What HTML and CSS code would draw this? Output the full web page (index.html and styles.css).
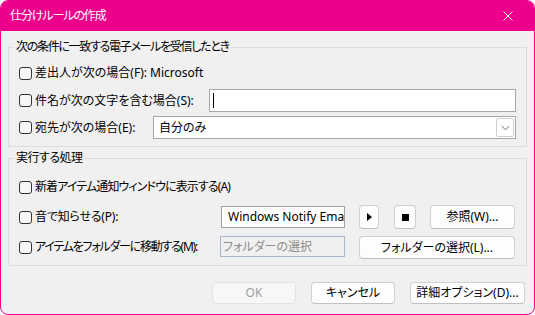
FILE: index.html
```html
<!DOCTYPE html>
<html lang="ja">
<head>
  <meta charset="UTF-8" />
  <title>仕分けルールの作成</title>
  <link rel="stylesheet" href="styles.css">
</head>
<body>
  <div class="dialog">
    <div class="titlebar">
      <span class="title">仕分けルールの作成</span>
      <svg class="close" viewBox="0 0 10 10"><path d="M0.5 0.5L9.5 9.5M9.5 0.5L0.5 9.5"/></svg>
    </div>

    <div class="content">
      <fieldset class="group group-cond">
        <legend>次の条件に一致する電子メールを受信したとき</legend>
        <div class="rows">
          <div class="row row-from">
            <span class="check"></span>
            <span>差出人が次の場合(F):&nbsp;Microsoft</span>
          </div>
          <div class="row row-subject">
            <span class="check"></span>
            <span>件名が次の文字を含む場合(S):</span>
            <div class="field field-subject"><span class="caret"></span></div>
          </div>
          <div class="row row-to">
            <span class="check"></span>
            <span>宛先が次の場合(E):</span>
            <div class="field select">
              <span>自分のみ</span>
              <span class="drop">
                <svg viewBox="0 0 10 6"><path d="M1 1L5 5L9 1"/></svg>
              </span>
            </div>
          </div>
        </div>
      </fieldset>

      <fieldset class="group group-action">
        <legend>実行する処理</legend>
        <div class="rows">
          <div class="row row-notify">
            <span class="check"></span>
            <span class="lbl-notify">新着アイテム通知ウィンドウに表示する(A)</span>
          </div>
          <div class="row row-sound">
            <span class="check"></span>
            <span class="lbl-sound">音で知らせる(P):</span>
            <div class="field field-sound">Windows Notify Ema</div>
            <button class="btn btn-icon btn-play"><span class="tri"></span></button>
            <button class="btn btn-icon btn-stop"><span class="sq"></span></button>
            <button class="btn btn-browse">参照(W)...</button>
          </div>
          <div class="row row-move">
            <span class="check"></span>
            <span class="lbl-move">アイテムをフォルダーに移動する(M):</span>
            <div class="field field-folder">フォルダーの選択</div>
            <button class="btn btn-folder">フォルダーの選択(L)...</button>
          </div>
        </div>
      </fieldset>

      <div class="footer">
        <button class="btn btn-foot btn-ok" disabled>OK</button>
        <button class="btn btn-foot">キャンセル</button>
        <button class="btn btn-foot btn-adv">詳細オプション(D)...</button>
      </div>
    </div>
  </div>
</body>
</html>
```

FILE: styles.css
```css
:root {
  --pink:    #ec008c;
  --face:    #f0f0f0;
  --frame:   #dcdcdc;
  --edit:    #a8a8a8;
  --btn-bd:  #d0d0d0;
  --text:    #000;
}
* { box-sizing: border-box; margin: 0; padding: 0; }
body {
  width: 535px;
  height: 315px;
  background: #fff;
  font-family: "Noto Sans", "Noto Sans CJK JP", sans-serif;
  font-size: 12px;
  line-height: 16px;
  font-feature-settings: "palt";
  color: var(--text);
}
.dialog {
  width: 535px;
  height: 315px;
  border: 1px solid var(--pink);
  border-radius: 8px;
  overflow: hidden;
  background: var(--face);
  display: flex;
  flex-direction: column;
}

/* title bar */
.titlebar {
  height: 30px;
  flex: none;
  background: var(--pink);
  display: flex;
  align-items: center;
  padding: 0 0 0 9px;
  color: #fff;
}
.title { flex: 1; letter-spacing: -1.1px; }
.close {
  width: 10px; height: 10px;
  margin-right: 21px;
  stroke: #fff;
  stroke-width: 1;
  fill: none;
}

.content {
  flex: 1;
  padding: 8px 7px 0;
}

/* group boxes */
.group {
  border: 1px solid var(--frame);
  min-inline-size: 0;
}
.group legend {
  margin-left: 5px;
  padding: 0 2px;
  line-height: 16px;
}
.group-cond legend { letter-spacing: -1.3px; }
.group-action legend { letter-spacing: -0.5px; }
.group-action { margin-top: 3px; }
.rows {
  display: flex;
  flex-direction: column;
  padding: 0 10px;
}
.group-cond .rows { padding-top: 8px; padding-bottom: 7px; }
.group-action .rows { padding-top: 11px; padding-bottom: 6px; padding-right: 11px; }

.row {
  display: flex;
  align-items: center;
  white-space: nowrap;
}
.row-from, .row-notify { height: 20px; }
.row-subject { height: 23px; margin-top: 6px; }
.row-to      { height: 23px; margin-top: 4px; }
.row-sound   { height: 24px; margin-top: 8px; }
.row-move    { height: 24px; margin-top: 6px; }

.lbl-notify { letter-spacing: -0.9px; }
.lbl-sound  { letter-spacing: -0.2px; }
.lbl-move   { letter-spacing: -1.25px; }

.check {
  width: 13px; height: 13px;
  flex: none;
  margin-right: 3px;
  border: 1px solid #333;
  border-radius: 3px;
  background: #f7f7f7;
}

/* edit fields */
.field {
  height: 100%;
  margin-left: auto;
  background: #fff;
  border: 1px solid var(--edit);
  display: flex;
  align-items: center;
  overflow: hidden;
}
.field-subject { width: 307px; padding-left: 3px; }
.caret {
  width: 1px; height: 15px;
  background: #000;
}
.select {
  width: 363px;
  padding: 0 1px 0 5px;
  justify-content: space-between;
}
.drop {
  width: 18px; height: 19px;
  border: 1px solid #cfcfcf;
  border-radius: 2px;
  background: #fff;
  display: flex;
  align-items: center;
  justify-content: center;
}
.drop svg {
  width: 9px; height: 6px;
  stroke: #555;
  stroke-width: 1;
  fill: none;
}
.field-sound {
  width: 124px;
  height: 22px;
  padding-left: 6px;
  border-color: #a0a0a0;
}
.field-folder {
  width: 125px;
  height: 21px;
  align-self: flex-start;
  margin-top: 1px;
  padding-left: 2px;
  background: var(--face);
  border-color: #a9b7cb;
  color: #8c8c8c;
}

/* buttons */
.btn {
  font: inherit;
  font-feature-settings: "palt";
  color: var(--text);
  background: #fdfdfd;
  border: 1px solid var(--btn-bd);
  border-bottom-color: #c0c0c0;
  border-radius: 4px;
  height: 100%;
  display: flex;
  align-items: center;
  justify-content: center;
}
.btn-icon { margin-left: 14px; }
.btn-play { width: 20px; }
.btn-stop { width: 22px; margin-left: 15px; }
.tri {
  width: 0; height: 0;
  border-left: 5px solid #000;
  border-top: 4px solid transparent;
  border-bottom: 4px solid transparent;
}
.sq {
  width: 7px; height: 7px;
  background: #000;
}
.btn-browse { width: 85px; margin-left: 14px; }
.btn-folder {
  width: 156px; height: 23px;
  align-self: flex-start;
  margin: 1px 0 0 14px;
}

/* footer */
.footer {
  display: flex;
  justify-content: flex-end;
  gap: 15px;
  padding: 16px 2px 0 0;
}
.btn-foot { width: 84px; height: 22px; }
.btn-adv { width: 115px; }
.btn-ok {
  background: #f7f7f7;
  border-color: #e3e3e3;
  color: #a0a0a0;
}
```
